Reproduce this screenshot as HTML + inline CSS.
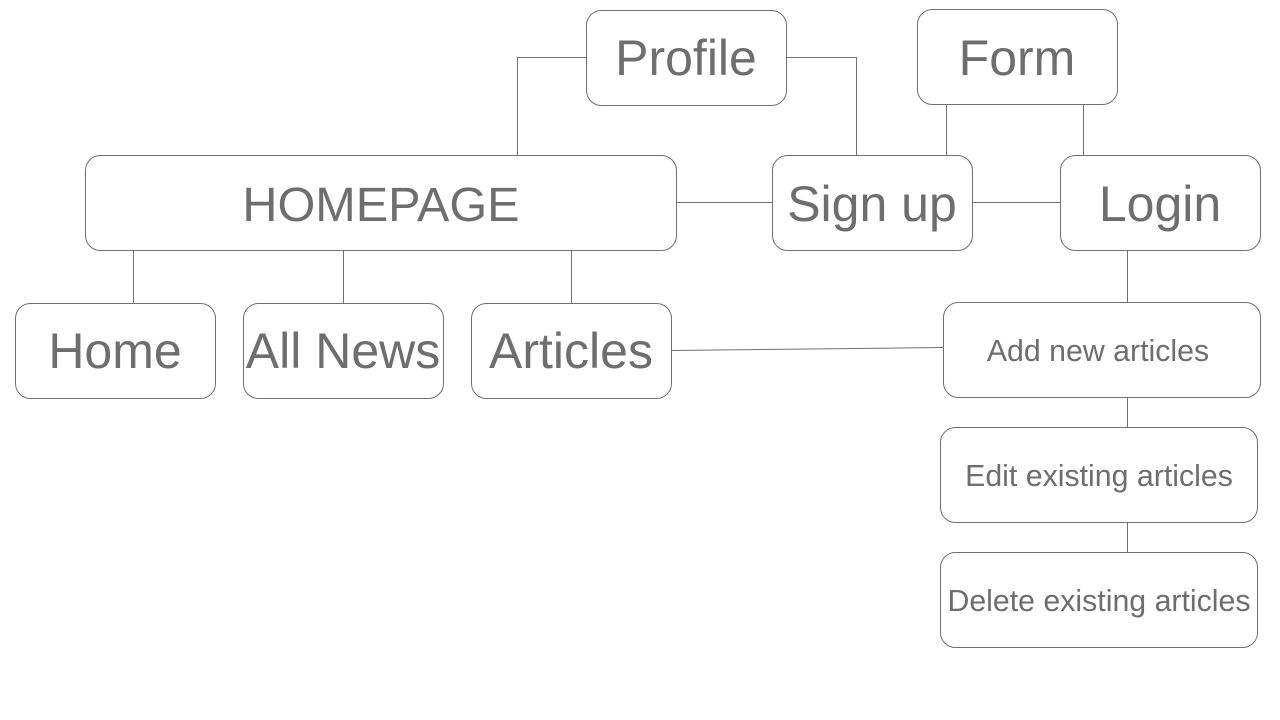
<!DOCTYPE html>
<html><head><style>
html,body{margin:0;padding:0;background:#fff;width:1280px;height:720px;overflow:hidden}
svg text{font-family:"Liberation Sans",Arial,sans-serif;fill:#6e6e6e;text-anchor:middle}
</style></head><body>
<svg width="1280" height="720" xmlns="http://www.w3.org/2000/svg">
<g fill="none" stroke="#707070" stroke-width="1">
<polyline points="586,57.5 517.5,57.5 517.5,155"/>
<polyline points="786,57.5 856.5,57.5 856.5,155"/>
<line x1="946.5" y1="104" x2="946.5" y2="155"/>
<line x1="1083.5" y1="104" x2="1083.5" y2="155"/>
<line x1="676" y1="202.5" x2="772" y2="202.5"/>
<line x1="972" y1="202.5" x2="1060" y2="202.5"/>
<line x1="133.5" y1="250" x2="133.5" y2="303"/>
<line x1="343.5" y1="250" x2="343.5" y2="303"/>
<line x1="571.5" y1="250" x2="571.5" y2="303"/>
<line x1="1127.5" y1="250" x2="1127.5" y2="302"/>
<line x1="1127.5" y1="397" x2="1127.5" y2="427"/>
<line x1="1127.5" y1="522" x2="1127.5" y2="552"/>
<line x1="671" y1="350.5" x2="943" y2="347.5"/>
<rect x="586.5" y="10.5" width="200" height="95" rx="15"/>
<rect x="917.5" y="9.5" width="200" height="95" rx="15"/>
<rect x="85.5" y="155.5" width="591" height="95" rx="15"/>
<rect x="772.5" y="155.5" width="200" height="95" rx="15"/>
<rect x="1060.5" y="155.5" width="200" height="95" rx="15"/>
<rect x="15.5" y="303.5" width="200" height="95" rx="15"/>
<rect x="243.5" y="303.5" width="200" height="95" rx="15"/>
<rect x="471.5" y="303.5" width="200" height="95" rx="15"/>
<rect x="943.5" y="302.5" width="317" height="95" rx="15"/>
<rect x="940.5" y="427.5" width="317" height="95" rx="15"/>
<rect x="940.5" y="552.5" width="317" height="95" rx="15"/>
</g>
<text x="686" y="75" font-size="50">Profile</text>
<text x="1017" y="75" font-size="50">Form</text>
<text x="381" y="221" font-size="48.6">HOMEPAGE</text>
<text x="872" y="221" font-size="50">Sign up</text>
<text x="1160" y="221" font-size="50">Login</text>
<text x="115" y="368" font-size="50">Home</text>
<text x="343" y="368" font-size="50">All News</text>
<text x="571" y="368" font-size="50">Articles</text>
<text x="1098" y="361" font-size="30.3">Add new articles</text>
<text x="1099" y="486" font-size="30.3">Edit existing articles</text>
<text x="1099" y="611" font-size="30.3">Delete existing articles</text>
</svg>
</body></html>
